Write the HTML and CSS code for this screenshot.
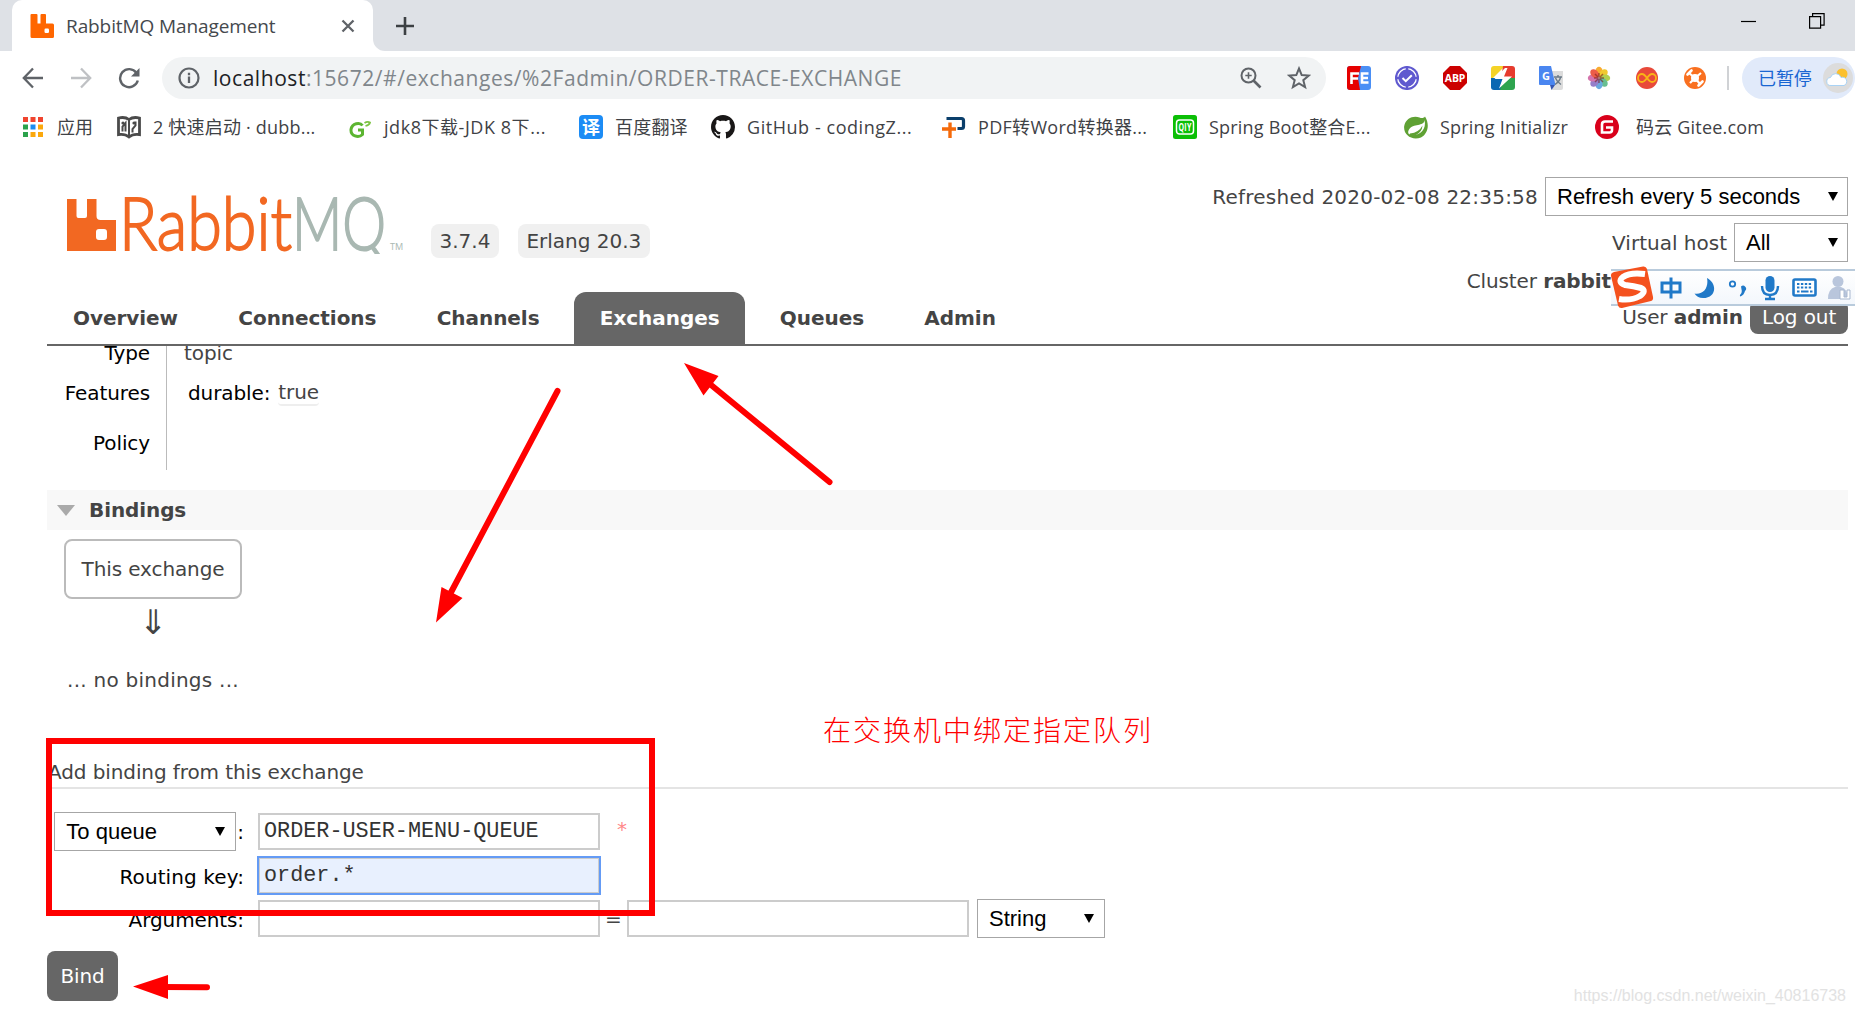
FILE: index.html
```html
<!DOCTYPE html>
<html lang="zh">
<head>
  <meta charset="UTF-8" />
  <title>RabbitMQ Management</title>
  <link rel="stylesheet" href="styles.css">
</head>
<body>
<div class="browser">
  <!-- tab strip -->
  <div class="tabstrip">
    <div class="tab">
      <svg class="favicon" width="24" height="24" viewBox="0 0 24 24"><path fill="#ff6600" d="M1.500 0h5q1 0 1 1v8.500h3V1q0-1 1-1h3.500q1 0 1 1v8.500h6.500q1.500 0 1.500 1.500v11.500q0 1.500-1.500 1.500H2q-1.500 0-1.500-1.500V1q0-1 1-1z"/><rect x="14.500" y="14.500" width="4.500" height="4.500" rx="1.200" fill="#fff"/></svg>
      <span class="tab-title">RabbitMQ Management</span>
      <svg width="14" height="14" viewBox="0 0 14 14"><path d="M1.500 1.500l11 11M12.500 1.500l-11 11" stroke="#5f6368" stroke-width="2.300"/></svg>
    </div>
    <svg class="tab-foot" width="12" height="12" viewBox="0 0 12 12"><path d="M0 0v12h12A12 12 0 0 1 0 0z" fill="#fff"/></svg>
    <svg class="new-tab" width="18" height="18" viewBox="0 0 18 18"><path d="M9 0v18M0 9h18" stroke="#3c4043" stroke-width="2.600"/></svg>
    <div class="window-btns">
      <svg width="15" height="16" viewBox="0 0 15 16"><path d="M0 8.500h15" stroke="#000" stroke-width="1.200"/></svg>
      <svg width="16" height="16" viewBox="0 0 16 16"><path d="M.6 3.600h11v11.500H.6zM3.600 3.600V.6h11.500v11.500h-3" fill="none" stroke="#000" stroke-width="1.200"/></svg>
    </div>
  </div>

  <!-- toolbar -->
  <div class="toolbar">
    <svg class="nav-icon" width="22" height="22" viewBox="0 0 22 22"><path d="M21 11H2M11 1.500L1.800 11l9.200 9.500" fill="none" stroke="#5f6368" stroke-width="2.300"/></svg>
    <svg class="nav-icon" width="22" height="22" viewBox="0 0 22 22"><path d="M1 11h19M11 1.500l9.200 9.500-9.200 9.500" fill="none" stroke="#bfc1c4" stroke-width="2.300"/></svg>
    <svg class="nav-icon reload" width="22" height="22" viewBox="0 0 22 22"><path d="M18.500 6A9 9 0 1 0 19.800 13.500" fill="none" stroke="#5f6368" stroke-width="2.400"/><path d="M21.500 1v8.500H13z" fill="#5f6368"/></svg>
    <div class="omnibox">
      <svg width="22" height="22" viewBox="0 0 22 22"><circle cx="11" cy="11" r="9.500" fill="none" stroke="#5f6368" stroke-width="2.200"/><path d="M11 9.500v6.500M11 5.800v2.400" stroke="#5f6368" stroke-width="2.300"/></svg>
      <span class="url"><b>localhost</b>:15672/#/exchanges/%2Fadmin/ORDER-TRACE-EXCHANGE</span>
      <svg class="lens" width="22" height="22" viewBox="0 0 22 22"><circle cx="8.500" cy="8.500" r="7" fill="none" stroke="#5f6368" stroke-width="2"/><path d="M13.500 13.500l7 7" stroke="#5f6368" stroke-width="2.600"/><path d="M8.500 5.300v6.400M5.300 8.500h6.400" stroke="#5f6368" stroke-width="1.600"/></svg>
      <svg width="24" height="24" viewBox="0 0 24 24"><path d="M12 2.500l2.700 6.600 7.100.5-5.500 4.600 1.800 6.900L12 17.400l-6.100 3.700 1.800-6.900L2.200 9.600l7.100-.5z" fill="none" stroke="#5f6368" stroke-width="2"/></svg>
    </div>
    <div class="extensions">
      <svg width="24" height="24" viewBox="0 0 24 24"><rect width="24" height="24" rx="3" fill="#4a8ff5"/><path d="M3 0h11l-3 12 2 12H3q-3 0-3-3V3q0-3 3-3z" fill="#e60000"/><path d="M4.500 18V7.500h7.500M4.500 12.500h6.500M21.500 7.500h-6.500v9h6.500M15 12h6" fill="none" stroke="#fff" stroke-width="2.600"/></svg>
      <svg width="24" height="24" viewBox="0 0 24 24"><circle cx="12" cy="12" r="12" fill="#5f59cf"/><circle cx="12" cy="12" r="9.300" fill="none" stroke="#fff" stroke-width="1.300"/><path d="M12 0v4M12 20v4M0 12h4M20 12h4" stroke="#5f59cf" stroke-width="2.500"/><path d="M7.500 12l3.300 3.200 6-6" fill="none" stroke="#fff" stroke-width="2"/></svg>
      <svg width="24" height="24" viewBox="0 0 24 24"><path d="M7 0h10l7 7v10l-7 7H7l-7-7V7z" fill="#cc0000"/><text x="1.800" y="16.300" class="abp" textLength="20.500" lengthAdjust="spacingAndGlyphs">ABP</text></svg>
      <svg width="24" height="24" viewBox="0 0 24 24"><clipPath id="sq"><rect width="24" height="24" rx="3"/></clipPath><g clip-path="url(#sq)"><path d="M0 0h14L0 14z" fill="#f5d327"/><path d="M12 0h12v13H10z" fill="#e63b2e"/><path d="M0 12h13v12H0z" fill="#0b67b2"/><path d="M12 12h12v12H9z" fill="#2ea44f"/><path d="M14 2L3.500 13h8L8 22.500 21 10.500h-8L16.500 2z" fill="#fff"/></g></svg>
      <svg width="24" height="24" viewBox="0 0 24 24"><path d="M9 5h15v17q0 2-2 2H13z" fill="#dcdcdc"/><path d="M11 19h5l-3.500 5z" fill="#3556b0"/><path d="M1 0h11l4.500 19H1q-1 0-1-1V1q0-1 1-1z" fill="#4a86f0"/><text x="3" y="14" class="gt-g">G</text><path d="M15 11h8M19 9v2M21.500 11.500q-1 4-5.500 7M16.500 12q1.500 4 5.500 6.500" fill="none" stroke="#6a7a88" stroke-width="1.400"/></svg>
      <svg width="24" height="24" viewBox="-12 -12 24 24"><g opacity=".9"><ellipse cy="-6.200" rx="3.600" ry="5" fill="#f9a21b"/><ellipse cy="-6.200" rx="3.600" ry="5" fill="#f0c419" transform="rotate(45)"/><ellipse cy="-6.200" rx="3.600" ry="5" fill="#a9cc3c" transform="rotate(90)"/><ellipse cy="-6.200" rx="3.600" ry="5" fill="#58b884" transform="rotate(135)"/><ellipse cy="-6.200" rx="3.600" ry="5" fill="#5aa0dc" transform="rotate(180)"/><ellipse cy="-6.200" rx="3.600" ry="5" fill="#8a72c4" transform="rotate(225)"/><ellipse cy="-6.200" rx="3.600" ry="5" fill="#d066a4" transform="rotate(270)"/><ellipse cy="-6.200" rx="3.600" ry="5" fill="#ea4b35" transform="rotate(315)"/></g><path d="M-4-4l8 8M4-4l-8 8M0-5v10M-5 0h10" stroke="#7a1d1e" stroke-width="1.500" opacity=".6"/></svg>
      <svg width="24" height="24" viewBox="0 0 24 24"><circle cx="12" cy="12" r="11" fill="#e8493a"/><path d="M12 12C9.500 8.500 8.500 8 7 8a4 4 0 0 0 0 8c1.500 0 2.500-.5 5-4s3.500-4 5-4a4 4 0 0 1 0 8c-1.500 0-2.500-.5-5-4z" fill="none" stroke="#f9b416" stroke-width="1.800"/></svg>
      <svg width="24" height="24" viewBox="0 0 24 24"><circle cx="12" cy="12" r="11" fill="#f97020"/><circle cx="12" cy="12" r="4" fill="#fff"/><path d="M12 12L6 7M12 12l6-5M12 12l5 6M12 12l-5 5" stroke="#fff" stroke-width="2.200"/><path d="M8.500 4.500L4.500 8.500M15.500 19.500l4-4" stroke="#fff" stroke-width="2.600" stroke-linecap="round"/></svg>
    </div>
    <div class="profile">
      <span>已暂停</span>
      <svg width="30" height="30" viewBox="0 0 30 30"><circle cx="15" cy="15" r="15" fill="#dcdcdc"/><circle cx="19" cy="11" r="5.500" fill="#fbc02d"/><path d="M8 22.500a4 4 0 0 1-.5-8 5.500 5.500 0 0 1 10.500 0 4 4 0 0 1 3 8z" fill="#fff" stroke="#a9d3f5" stroke-width="1"/></svg>
    </div>
  </div>

  <!-- bookmarks -->
  <div class="bookmarks">
    <a class="bookmark">
      <svg width="20" height="20" viewBox="0 0 20 20"><path d="M0 0h5v5H0zM7.500 0h5v5h-5zM15 0h5v5h-5z" fill="#f0442e"/><path d="M0 7.500h5v5H0zM0 15h5v5H0z" fill="#2ba24c"/><path d="M7.500 7.500h5v5h-5z" fill="#1a8cf0"/><path d="M15 7.500h5v5h-5zM7.500 15h5v5h-5zM15 15h5v5h-5z" fill="#fba80c"/></svg>
      <span>应用</span>
    </a>
    <a class="bookmark">
      <svg width="24" height="24" viewBox="0 0 24 24"><path d="M1.500 3Q8 1.500 12 4.500 16 1.500 22.500 3v16.500Q16 18.500 12 22q-4-3.500-10.500-2.500z" fill="#fff" stroke="#4a4a4a" stroke-width="2.800"/><path d="M12 4v17M5.500 16.500v-5L8.500 8v8.500M18.500 6.500v4L15.500 14v3.500" fill="none" stroke="#4a4a4a" stroke-width="2"/><circle cx="6" cy="8" r="1.600" fill="#4a4a4a"/><circle cx="17" cy="8" r="1.600" fill="#4a4a4a"/></svg>
      <span class="tight">2 快速启动 · dubb...</span>
    </a>
    <a class="bookmark">
      <svg width="24" height="24" viewBox="0 0 24 24"><path d="M14.500 10.500C12 7 4 8 3 14.500 2.500 21 10.500 23.500 14.500 19.500v-4.500h-4.500" fill="none" stroke="#5cb531" stroke-width="3"/><path d="M16.500 8q3-2 5.500-.5-.5 2.500-4.500 3.500" fill="none" stroke="#7cc442" stroke-width="1.800"/></svg>
      <span class="loose">jdk8下载-JDK 8下...</span>
    </a>
    <a class="bookmark">
      <svg width="24" height="24" viewBox="0 0 24 24"><rect width="24" height="24" rx="4" fill="#1c8cf5"/><text x="3" y="18.500" class="fanyi">译</text></svg>
      <span class="tight">百度翻译</span>
    </a>
    <a class="bookmark">
      <svg width="24" height="24" viewBox="0 0 16 16"><path fill="#191717" d="M8 0C3.580 0 0 3.580 0 8c0 3.540 2.290 6.530 5.470 7.590.4.070.55-.17.55-.38 0-.19-.01-.82-.01-1.490-2.010.37-2.530-.49-2.690-.94-.09-.23-.48-.94-.82-1.130-.28-.15-.68-.52-.01-.53.63-.01 1.080.58 1.230.82.72 1.210 1.870.87 2.330.66.07-.52.28-.87.51-1.070-1.780-.2-3.640-.89-3.640-3.950 0-.87.31-1.590.82-2.150-.08-.2-.36-1.020.08-2.120 0 0 .67-.21 2.200.82.64-.18 1.320-.27 2-.27s1.360.09 2 .27c1.530-1.040 2.200-.82 2.200-.82.44 1.100.16 1.920.08 2.120.51.56.82 1.270.82 2.150 0 3.070-1.870 3.750-3.650 3.950.29.25.54.73.54 1.480 0 1.070-.01 1.930-.01 2.200 0 .21.15.46.55.38A8.010 8.010 0 0 0 16 8c0-4.420-3.580-8-8-8z"/></svg>
      <span class="loose">GitHub - codingZ...</span>
    </a>
    <a class="bookmark">
      <svg width="24" height="24" viewBox="0 0 24 24"><path d="M4.500 3.500h15q2 0 2 2v6q0 2-2 2h-4" fill="none" stroke="#0b3f6b" stroke-width="3.200"/><path d="M8 7.500V23M0 14h14" stroke="#f56a0a" stroke-width="3.400"/></svg>
      <span>PDF转Word转换器...</span>
    </a>
    <a class="bookmark">
      <svg width="24" height="24" viewBox="0 0 24 24"><rect width="24" height="24" rx="2.500" fill="#0bbf06"/><rect x="3.500" y="5" width="17" height="14" rx="3" fill="none" stroke="#fff" stroke-width="1.500"/><text x="5.500" y="15.800" class="qiyi" textLength="13" lengthAdjust="spacingAndGlyphs">QIY</text></svg>
      <span class="tight">Spring Boot整合E...</span>
    </a>
    <a class="bookmark">
      <svg width="24" height="24" viewBox="0 0 24 24"><path d="M21 1.500c5 8 3 17-4 21C8 26-1 20 .2 11 1.500 3 10 0 15.500 2.500 18 3.500 20 3 21 1.500z" fill="#5fa134"/><path d="M20.500 5C20 12 9 8 5 14.500c-2 3.500 0 5.500 2.500 5.500C15 21 23 15 20.500 5z" fill="#fff"/><path d="M6 18.500Q15 17.500 18.500 10.500 18 17 12 20 8 21 5 20z" fill="#5fa134"/></svg>
      <span class="tight">Spring Initializr</span>
    </a>
    <a class="bookmark gitee">
      <svg width="24" height="24" viewBox="0 0 24 24"><circle cx="12" cy="12" r="12" fill="#d9001b"/><path d="M18 6.500h-8q-3 0-3 3v8h7.500q2.500 0 2.500-2.500v-2.500h-6" fill="none" stroke="#fff" stroke-width="2.600"/></svg>
      <span class="tight">码云 Gitee.com</span>
    </a>
  </div>
</div>

<!-- management page header -->
<header class="header">
  <div class="brand">
    <svg class="logo" width="340" height="62" viewBox="0 0 340 62">
      <path d="M1 7h9.500v17q0 2 2 2H19q2 0 2-2V7h9.500v17q0 4 4 4H50v31H1zM33 37q-3 0-3 3v5q0 3 3 3h5q3 0 3-3v-5q0-3-3-3z" fill="#f26822" fill-rule="evenodd"/>
      <text x="53" y="57.500" class="logo-rabbit" textLength="173" lengthAdjust="spacingAndGlyphs">Rabbit</text>
      <text x="226" y="57.500" class="logo-mq" textLength="94" lengthAdjust="spacingAndGlyphs">MQ</text>
      <text x="324" y="57.500" class="logo-tm" textLength="13" lengthAdjust="spacingAndGlyphs">TM</text>
    </svg>
    <span class="version">3.7.4</span>
    <span class="version">Erlang 20.3</span>
  </div>
  <nav class="tabs">
    <a>Overview</a>
    <a>Connections</a>
    <a>Channels</a>
    <a class="selected">Exchanges</a>
    <a>Queues</a>
    <a>Admin</a>
  </nav>
  <div class="login">
    <div class="login-row">
      <span class="refreshed">Refreshed 2020-02-08 22:35:58</span>
      <div class="select select-refresh">Refresh every 5 seconds<i></i></div>
    </div>
    <div class="login-row">
      <span class="vhost">Virtual host</span>
      <div class="select select-vhost">All<i></i></div>
    </div>
    <div class="login-row cluster"><span>Cluster <b>rabbit</b></span></div>
    <div class="login-row user">
      <span>User <b>admin</b></span>
      <div class="btn logout">Log out</div>
    </div>
  </div>
</header>

<main class="main">
  <div class="facts">
    <div class="fact fact-type"><div class="th">Type</div><div class="td">topic</div></div>
    <div class="fact fact-features"><div class="th">Features</div><div class="td"><span class="key">durable:</span> <span class="val">true</span></div></div>
    <div class="fact fact-policy"><div class="th">Policy</div><div class="td"></div></div>
  </div>

  <h2 class="section"><i></i>Bindings</h2>
  <div class="bindings">
    <div class="exchange">This exchange</div>
    <div class="arrow">⇓</div>
    <div class="empty">... no bindings ...</div>
  </div>

  <h3 class="form-title">Add binding from this exchange</h3>
  <div class="form">
    <div class="form-row">
      <div class="label"><div class="select select-dest">To queue<i></i></div>:</div>
      <div class="input">ORDER-USER-MENU-QUEUE</div>
      <span class="mand">*</span>
    </div>
    <div class="form-row">
      <div class="label label-low routing">Routing key:</div>
      <div class="input focus">order.*</div>
    </div>
    <div class="form-row">
      <div class="label label-low">Arguments:</div>
      <div class="input"></div>
      <span class="eq">=</span>
      <div class="input"></div>
      <div class="select select-type">String<i></i></div>
    </div>
  </div>
  <div class="btn bind">Bind</div>
</main>

<!-- input method bar floating over the page -->
<div class="ime">
  <svg class="ime-logo" width="46" height="46" viewBox="0 0 46 46"><path d="M5 7L34 1.500q3-.5 4 2.500l6 28q.5 3-2 4L13 43q-3 .5-4-2.500L2 11q-.5-3 3-4z" fill="#f4511e"/><path d="M36 9Q21 7 14 12q-6 5 2 8 9 1 16 3 6 3-1 8-9 5-21 3" fill="none" stroke="#fff" stroke-width="6"/></svg>
  <svg width="22" height="24" viewBox="0 0 22 24"><path d="M2 7h18v9H2zM11 1.500v21" fill="none" stroke="#2079c8" stroke-width="3"/></svg>
  <svg width="22" height="24" viewBox="0 0 22 24"><path d="M13 2c11 6 9 20-4 20-4 0-7-2-8.500-4.500C9 19 15 12 13 2z" fill="#2079c8"/></svg>
  <svg width="20" height="24" viewBox="0 0 20 24"><circle cx="4.500" cy="8" r="2.700" fill="none" stroke="#2079c8" stroke-width="1.800"/><path d="M13 10.500a2.900 2.900 0 1 1 4 4.500q-1 4-4.500 5.500-1-.5-.5-1.500 2-2 1.800-4z" fill="#2079c8"/></svg>
  <svg width="20" height="26" viewBox="0 0 20 26"><rect x="5.500" y="1" width="9" height="16" rx="4.500" fill="#2079c8"/><path d="M2 11q0 9 8 9t8-9M10 20v4M5 24h10" fill="none" stroke="#2079c8" stroke-width="2.400"/></svg>
  <svg width="26" height="20" viewBox="0 0 26 20"><rect x="1.500" y="1.500" width="22" height="16" rx="1.500" fill="#fff" stroke="#2079c8" stroke-width="2.600"/><path d="M5 6h15M5 9.500h15" stroke="#2079c8" stroke-width="2" stroke-dasharray="2.400 1.500"/><path d="M5 13.500h2.500M9 13.500h7.500M18 13.500h2.500" stroke="#2079c8" stroke-width="2"/></svg>
  <svg class="ime-user" width="24" height="26" viewBox="0 0 24 26"><circle cx="10" cy="6.500" r="5.500" fill="#b9c6dc"/><path d="M0 24q0-10 7-12h6q7 2 7 12z" fill="#b9c6dc"/><path d="M12 15h4v7h3v-7h3v9H12z" fill="#fff" stroke="#a9b8d0" stroke-width="1"/></svg>
</div>

<!-- red annotations -->
<svg class="notes" width="1855" height="1014" viewBox="0 0 1855 1014">
  <rect x="49" y="741" width="603" height="172" fill="none" stroke="#f00" stroke-width="6"/>
  <g stroke="#f00" stroke-width="6" stroke-linecap="round" fill="#f00">
    <path d="M829.500 482L705 380"/><path d="M557.500 391L448 598"/><path d="M207 987.300L160 987"/>
  </g>
  <path d="M684 363l34.500 13-15 19.500zM436 622.500l5.500-35.500 21 11zM133 986.500l35-11.500v24z" fill="#f00"/>
</svg>
<div class="note-text">在交换机中绑定指定队列</div>
<div class="watermark">https://blog.csdn.net/weixin_40816738</div>
</body>
</html>
```
FILE: styles.css
```css
* { box-sizing: border-box; }
body {
  position: relative;
  width: 1855px;
  height: 1014px;
  margin: 0;
  overflow: hidden;
  background: #fff;
  color: #444;
  font: 20px/24px "DejaVu Sans", sans-serif;
  letter-spacing: -0.1px;
}
svg { display: block; flex: none; }

/* browser chrome */
.browser {
  height: 150px;
  font-family: "Open Sans", "Noto Sans CJK SC", sans-serif;
}
.tabstrip {
  display: flex;
  align-items: center;
  height: 51px;
  padding-left: 12px;
  background: #dee1e6;
}
.tab {
  display: flex;
  align-items: center;
  width: 361px;
  height: 51px;
  padding: 0 18px;
  border-radius: 10px 10px 0 0;
  background: #fff;
  color: #45494d;
  font-size: 19px;
}
.tab-title { flex: 1; padding-left: 12px; }
.tab-foot { align-self: flex-end; }
.new-tab { margin-left: 11px; }
.window-btns {
  display: flex;
  gap: 53px;
  margin: 0 30px 9px auto;
}
.toolbar {
  display: flex;
  align-items: center;
  height: 54px;
  padding-left: 22px;
}
.nav-icon { margin-right: 26px; }
.reload { margin-right: 22px; }
.omnibox {
  display: flex;
  align-items: center;
  width: 1164px;
  height: 42px;
  padding: 0 15px 0 16px;
  border-radius: 21px;
  background: #f1f3f4;
}
.url {
  flex: 1;
  padding-left: 13px;
  color: #80868b;
  font-size: 21px;
  letter-spacing: 0.55px;
}
.url b { color: #202124; font-weight: 400; }
.lens { margin-right: 25px; }
.extensions {
  display: flex;
  gap: 24px;
  width: 382px;
  height: 24px;
  margin: 0 13px 0 21px;
  border-right: 2px solid #d0d2d5;
}
.abp { fill: #fff; font: bold 11px "Open Sans", sans-serif; }
.gt-g { fill: #fff; font: bold 11px "Open Sans", sans-serif; }
.profile {
  display: flex;
  flex: 1;
  align-items: center;
  gap: 11px;
  height: 42px;
  padding-left: 16px;
  border-radius: 21px;
  background: #e1eafa;
  color: #1a66d2;
  font-size: 18px;
}
.bookmarks {
  display: grid;
  grid-template-columns: 94px 231px 231px 132px 231px 231px 231px 191px 200px;
  height: 43px;
  padding: 0 0 0 23px;
  color: #3f4246;
  font-size: 18px;
  letter-spacing: 0.3px;
}
.bookmark {
  display: flex;
  align-items: center;
  gap: 12px;
  white-space: nowrap;
}
.bookmark:first-child { gap: 14px; letter-spacing: 0; }
.gitee { gap: 17px; }
.tight { letter-spacing: 0.2px; }
.loose { letter-spacing: 0.55px; }
.fanyi { fill: #fff; font: bold 18px "Noto Sans CJK SC", sans-serif; letter-spacing: 0; }
.qiyi { fill: #fff; font: bold 10px "Open Sans", sans-serif; }

/* page header */
.header {
  display: grid;
  grid-template-columns: 1fr 640px;
  grid-template-rows: 142px 52px;
  height: 196px;
  margin: 0 7px 0 47px;
  border-bottom: 2px solid #666;
}
.brand {
  display: flex;
  align-items: flex-end;
  padding: 0 0 34px 19px;
}
.logo { margin: 0 25px 4px 0; }
.logo-rabbit, .logo-mq { font: 300 73px Lato, "Open Sans", sans-serif; letter-spacing: 0; }
.logo-rabbit { fill: #f26822; stroke: #f26822; stroke-width: 1.8; }
.logo-mq { fill: #a9b8b2; stroke: #a9b8b2; stroke-width: 1.8; }
.logo-tm { fill: #a9b8b2; font: 9px "Open Sans", sans-serif; }
.version {
  height: 34px;
  margin-right: 19px;
  padding: 5px 8.500px;
  border-radius: 8px;
  background: #f0f0f0;
  letter-spacing: 0;
}
.tabs {
  grid-row: 2;
  display: flex;
  gap: 9.300px;
  letter-spacing: -0.05px;
}
.tabs a {
  height: 52px;
  padding: 14px 25px 14px 26px;
  border-radius: 12px 12px 0 0;
  font-weight: bold;
}
.tabs .selected { background: #666; color: #fff; }
.login {
  grid-column: 2;
  grid-row: 1 / 3;
  padding-top: 27px;
}
.login-row {
  display: flex;
  align-items: center;
  justify-content: flex-end;
  gap: 7px;
  height: 39px;
  margin-bottom: 7px;
}
.refreshed { letter-spacing: 0.22px; }
.vhost { letter-spacing: 0; }
.cluster { height: 36px; margin: -6px 0 0; padding-right: 237px; }
.user { height: 36px; margin: 0; }
.select {
  display: flex;
  align-items: center;
  justify-content: space-between;
  height: 39px;
  padding: 0 9px 0 11px;
  border: 1px solid #a6a6a6;
  background: #fff;
  color: #000;
  font: 22px "Liberation Sans", Arial, sans-serif;
  letter-spacing: 0;
}
.select i {
  border: 5px solid transparent;
  border-top: 9px solid #000;
  border-bottom: 0;
}
.select-refresh { width: 303px; }
.select-vhost { width: 114px; }
.btn {
  border-radius: 8px;
  background: #666;
  color: #fff;
}
.logout { width: 98px; height: 34px; padding: 5px 0 0 12px; }

/* page body */
.main {
  height: 668px;
  margin: 0 7px 0 47px;
  overflow: hidden;
}
.facts { height: 124px; overflow: hidden; }
.fact { display: flex; }
.th {
  display: flex;
  align-items: center;
  justify-content: flex-end;
  width: 120px;
  padding-right: 16px;
  border-right: 1px solid #bbb;
  color: #000;
}
.td { display: flex; align-items: center; padding-left: 17px; }
.fact-type { height: 24px; margin-top: -5px; }
.fact-features { height: 55px; }
.fact-policy { height: 50px; }
.fact-policy .th { padding-bottom: 5px; }
.key { padding: 0 8px 0 4px; color: #000; }
.val { border-bottom: 2px solid #eee; border-radius: 4px; }
.section {
  display: flex;
  align-items: center;
  height: 40px;
  margin: 20px 0 9px;
  padding-left: 10px;
  background: #f8f8f8;
  font-size: 20px;
}
.section i {
  margin-right: 14px;
  border: 9.5px solid transparent;
  border-top: 11px solid #aaa;
  border-bottom: 0;
}
.bindings {
  width: 178px;
  height: 218px;
  margin-left: 17px;
  text-align: center;
}
.exchange {
  height: 60px;
  border: 2px solid #bbb;
  border-radius: 8px;
  line-height: 57px;
}
.arrow { height: 46px; font-size: 34px; line-height: 46px; }
.empty { margin-top: 23px; letter-spacing: 0.25px; }
.form-title {
  height: 32px;
  margin: 0;
  padding: 3px 0 0 1px;
  border-bottom: 2px solid #e4e4e4;
  font-size: 20px;
  font-weight: 400;
}
.form { margin-top: 21px; }
.form-row {
  display: flex;
  align-items: center;
  height: 43.5px;
}
.label {
  display: flex;
  align-items: center;
  justify-content: flex-end;
  gap: 1px;
  width: 197px;
  margin-right: 14px;
  color: #000;
}
.label-low { padding-top: 3px; }
.routing { letter-spacing: 0.1px; }
.select-dest { width: 182px; padding-right: 10px; }
.select-type { width: 128px; margin-left: 8px; padding-right: 10px; }
.input {
  width: 342px;
  height: 37px;
  padding: 0 4px;
  border: 2px solid #ccc;
  color: #333;
  font: 21.800px/33px "Liberation Mono", "Courier New", monospace;
  letter-spacing: 0;
}
.focus {
  background: #e8f0fe;
  outline: 2px solid #649bf5;
  outline-offset: -1px;
}
.mand { margin: -6px 0 0 17px; color: #f88; }
.eq { width: 27px; padding-left: 5px; }
.bind {
  width: 71px;
  height: 50px;
  margin-top: 10px;
  line-height: 51px;
  text-align: center;
}

/* overlays */
.ime {
  position: absolute;
  top: 269px;
  left: 1611px;
  display: flex;
  align-items: center;
  gap: 12px;
  width: 244px;
  height: 37px;
  border: solid #b9cbdc;
  border-width: 2px 0;
  background: linear-gradient(#fff, #f3f7fc);
}
.ime-logo { margin: 0 -7px 0 -2px; }
.ime-user { margin-left: -2px; }
.notes { position: absolute; top: 0; left: 0; }
.note-text {
  position: absolute;
  top: 707px;
  left: 823px;
  color: #f00;
  font: 300 28px/44px "Noto Sans CJK SC", sans-serif;
  letter-spacing: 2px;
}
.watermark {
  position: absolute;
  right: 9px;
  bottom: 8px;
  color: #e2e2e2;
  font: 16px/20px "Liberation Sans", Arial, sans-serif;
  letter-spacing: 0;
}
```
